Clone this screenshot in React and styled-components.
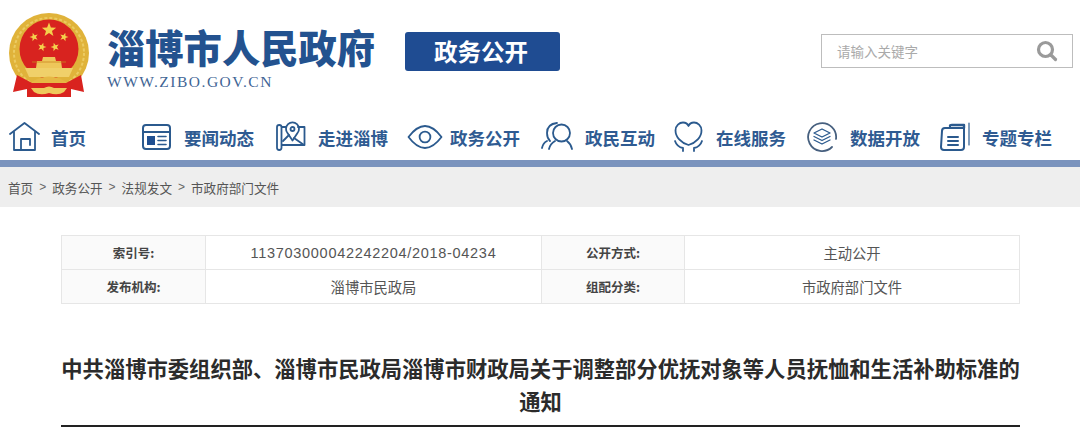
import React from "react";
import styled, { createGlobalStyle } from "styled-components";

const Global = createGlobalStyle`
  html, body { margin: 0; padding: 0; background: #fff; }
  body { width: 1080px; height: 437px; overflow: hidden; font-family: "Noto Sans CJK SC", "Liberation Sans", sans-serif; }
`;
const Page = styled.div`width: 1080px; height: 437px; overflow: hidden;`;
const Header = styled.header`display: flex; align-items: flex-start; height: 110px; padding: 12px 0 0 8px; box-sizing: border-box;`;
const Emblem = styled.svg`width: 81px; height: 88px; flex: none;`;
const Brand = styled.div`display: flex; flex-direction: column; margin-left: 18px; width: 298px; padding-top: 12px;`;
const BrandName = styled.div`font-size: 38.3px; line-height: 46px; font-weight: 900; color: #23528f; white-space: nowrap;`;
const BrandUrl = styled.div`font-family: "Liberation Serif", serif; font-size: 15.5px; line-height: 18px; margin-top: 3px; color: #3f6595; letter-spacing: 1.5px;`;
const Badge = styled.div`width: 155px; height: 39px; box-sizing: border-box; padding: 0 3px 2px 0; margin: 20px 0 0 0; background: #1f4c92; color: #fff; border-radius: 3px; font-size: 23.5px; font-weight: 700; display: flex; align-items: center; justify-content: center;`;
const Search = styled.div`width: 252px; height: 34px; margin: 22px 0 0 261px; flex: none; box-sizing: border-box; border: 1px solid #bdbdbd; display: flex; align-items: center; justify-content: space-between; padding: 0 13px 0 15px; color: #aaa; font-size: 13.5px;`;
const Nav = styled.nav`display: flex; height: 50px; box-sizing: border-box; padding: 9px 0 0 9px; align-items: flex-start;`;
const NavItem = styled.div`display: flex; align-items: center; height: 36px; width: ${p => p.$w}px; flex: none; font-size: 17.5px; font-weight: 700; color: #2f5b92; white-space: nowrap;`;
const NavIcon = styled.svg`width: ${p => p.$w || 32}px; height: 32px; flex: none; margin-right: ${p => p.$gap}px; fill: none; stroke: #2b5a8e; stroke-width: ${p => p.$sw || 1.8}; stroke-linecap: round; stroke-linejoin: round;`;
const Stripe = styled.div`height: 7px; background: #7a93bd;`;
const Crumbs = styled.div`height: 40px; background: #eeeeee; display: flex; align-items: center; padding-left: 8px; font-size: 12.6px; color: #555; gap: 6px;`;
const Sep = styled.span`font-family: "Liberation Sans", sans-serif; color: #666; font-size: 12px;`;
const Content = styled.main`padding: 28px 60px 0 61px;`;
const Info = styled.div`display: grid; grid-template-columns: 144px 336px 143px 335px; border-top: 1px solid #e6e6e6; border-left: 1px solid #e6e6e6;`;
const Cell = styled.div`height: 34px; box-sizing: border-box; border-right: 1px solid #e6e6e6; border-bottom: 1px solid #e6e6e6; display: flex; align-items: center; justify-content: center; font-size: 14.3px; color: #555;`;
const Code = styled(Cell)`font-family: "Liberation Sans", sans-serif; font-size: 14.5px; letter-spacing: 0.7px;`;
const Key = styled(Cell)`background: #fafafa; font-weight: 700; color: #444; font-size: 12.5px;`;
const Title = styled.h1`margin: 47px 0 0; font-size: 21.3px; line-height: 33px; font-weight: 700; color: #2b2b2b; text-align: center; height: 74px; border-bottom: 2px solid #222;`;

const star = (cx, cy, r, rot = 0) => {
  const pts = [];
  for (let i = 0; i < 10; i++) {
    const a = (Math.PI / 5) * i - Math.PI / 2 + rot;
    const q = i % 2 ? r * 0.42 : r;
    pts.push(`${(cx + q * Math.cos(a)).toFixed(1)},${(cy + q * Math.sin(a)).toFixed(1)}`);
  }
  return pts.join(" ");
};

const NationalEmblem = () => (
  <Emblem viewBox="0 0 81 88">
    <circle cx="41" cy="41" r="40" fill="#e0b33a" />
    <circle cx="41" cy="41" r="35" fill="none" stroke="#eccb62" strokeWidth="2" strokeDasharray="3 2" />
    <circle cx="41" cy="37" r="29.5" fill="#d8231f" />
    <polygon points={star(41, 18, 7.5)} fill="#f4d14c" />
    <polygon points={star(26, 25, 4.5, -0.3)} fill="#f4d14c" />
    <polygon points={star(34, 35, 4.5, 0.3)} fill="#f4d14c" />
    <polygon points={star(47, 35, 4.5, -0.3)} fill="#f4d14c" />
    <polygon points={star(56, 25, 4.5, 0.3)} fill="#f4d14c" />
    <path d="M28 56 L29 49 L34 49 L35 45 L47 45 L48 49 L53 49 L54 56 Z" fill="#eec65a" />
    <path d="M24 50 H58" stroke="#c9861f" strokeWidth="0.8" />
    <path d="M17 56 H65 L61 65 H21 Z" fill="#f0d06a" />
    <path d="M22 71 Q41 58 60 71 L56 74 H26 Z" fill="#e6b843" />
    <path d="M9 63 L24 71 H58 L73 63 L76 80 L63 77 V85 H19 V77 L5 80 Z" fill="#d9231f" />
    <path d="M23 76 H36 Q41 73 46 76 H59 L56 80 Q50 84 41 81 Q32 84 26 80 Z" fill="#efc95c" />
  </Emblem>
);

const Loupe = () => (
  <svg width="24" height="24" viewBox="0 0 24 24" fill="none" stroke="#9a9a9a" strokeWidth="3.2" strokeLinecap="round">
    <circle cx="10.5" cy="10.5" r="7" />
    <path d="M16 16 L20.5 20.5" />
  </svg>
);

const HomeIcon = () => (
  <NavIcon viewBox="0 0 32 32" $w={32} $gap={10}>
    <path d="M1 13 L15.5 2 L30 13" />
    <path d="M5 11 V29 H26 V11" />
    <path d="M12 29 V18 H21 V24" />
  </NavIcon>
);
const NewsIcon = () => (
  <NavIcon viewBox="0 0 32 32" $w={32} $gap={11} $sw={2}>
    <rect x="2" y="4" width="27" height="24" rx="3" />
    <path d="M2 11 H29" />
    <path d="M17 15.5 H25 M17 19.5 H25 M17 23.5 H25" strokeWidth="1.6" />
    <rect x="6" y="15" width="8" height="9" fill="#1f4f91" stroke="none" />
  </NavIcon>
);
const MapIcon = () => (
  <NavIcon viewBox="0 0 32 32" $w={32} $gap={11}>
    <rect x="2" y="4" width="4.5" height="25" rx="2.2" />
    <path d="M7 6 H11 M23 6 H29.5 V24 H7" />
    <path d="M12.5 12 A6.5 6.5 0 1 1 22.5 12 L17.5 19.5 Z" />
    <circle cx="17.5" cy="8" r="2" />
    <path d="M8 20 L14 14 M19 17 L29 24" />
  </NavIcon>
);
const EyeIcon = () => (
  <NavIcon viewBox="0 0 36 32" $w={36} $gap={7}>
    <path d="M1.5 16 Q18 -6 34.5 16 Q18 38 1.5 16 Z" />
    <circle cx="18" cy="16" r="5.4" />
  </NavIcon>
);
const PeopleIcon = () => (
  <NavIcon viewBox="0 0 32 32" $w={32} $gap={12}>
    <circle cx="20.5" cy="12" r="8.5" />
    <path d="M14 20 Q9 23 8 28 M26 20 Q30 23 31 28" />
    <path d="M16 2 Q6 3 6 12 Q6 17 9 20 M1 27 Q2 22 6 20" />
  </NavIcon>
);
const HeartIcon = () => (
  <NavIcon viewBox="0 0 32 32" $w={32} $gap={11}>
    <path d="M15.5 24 C8 22 2.5 16 2.5 9.5 C2.5 4.5 6.5 1.5 10 1.5 C12.5 1.5 14.5 2.5 15.5 5 C16.5 2.5 18.5 1.5 21 1.5 C24.5 1.5 28.5 4.5 28.5 9.5 C28.5 16 23 22 15.5 24 Z" />
    <path d="M2 20 Q4 26 10 27 V30 M29 20 Q27 26 21 27 V30" />
  </NavIcon>
);
const LayersIcon = () => (
  <NavIcon viewBox="0 0 32 32" $w={32} $gap={11}>
    <path d="M25 26 A14 14 0 1 1 29 18" stroke="#47607f" />
    <path d="M15 8 L23 12 L15 16 L7 12 Z" strokeWidth="1.3" />
    <path d="M7 15.5 L15 19.5 L23 15.5 M7 19 L15 23 L23 19" strokeWidth="1.3" />
  </NavIcon>
);
const BookIcon = () => (
  <NavIcon viewBox="0 0 32 32" $w={32} $gap={11}>
    <path d="M25 7 V26 Q25 29 22 29 H5 Q2 29 2 26 L3 10 Q3 7 6 7 Z" strokeWidth="2" />
    <path d="M11 5 Q11 4 13 4 H25 V7" strokeWidth="2.4" />
    <path d="M30 2 V24" strokeWidth="1.2" />
    <path d="M9 16 H19 M9 20 H19 M9 24 H19" strokeWidth="2" />
  </NavIcon>
);

const items = [
  ["首页", HomeIcon, 132],
  ["要闻动态", NewsIcon, 134],
  ["走进淄博", MapIcon, 132],
  ["政务公开", EyeIcon, 134],
  ["政民互动", PeopleIcon, 132],
  ["在线服务", HeartIcon, 134],
  ["数据开放", LayersIcon, 132],
  ["专题专栏", BookIcon, 130],
];

export default function App() {
  return (
    <Page>
      <Global />
      <Header>
        <NationalEmblem />
        <Brand>
          <BrandName>淄博市人民政府</BrandName>
          <BrandUrl>WWW.ZIBO.GOV.CN</BrandUrl>
        </Brand>
        <Badge>政务公开</Badge>
        <Search>
          <span>请输入关键字</span>
          <Loupe />
        </Search>
      </Header>
      <Nav>
        {items.map(([label, Icon, w]) => (
          <NavItem key={label} $w={w}>
            <Icon />
            {label}
          </NavItem>
        ))}
      </Nav>
      <Stripe />
      <Crumbs>
        <span>首页</span><Sep>&gt;</Sep>
        <span>政务公开</span><Sep>&gt;</Sep>
        <span>法规发文</span><Sep>&gt;</Sep>
        <span>市政府部门文件</span>
      </Crumbs>
      <Content>
        <Info>
          <Key>索引号:</Key>
          <Code>113703000042242204/2018-04234</Code>
          <Key>公开方式:</Key>
          <Cell>主动公开</Cell>
          <Key>发布机构:</Key>
          <Cell>淄博市民政局</Cell>
          <Key>组配分类:</Key>
          <Cell>市政府部门文件</Cell>
        </Info>
        <Title>中共淄博市委组织部、淄博市民政局淄博市财政局关于调整部分优抚对象等人员抚恤和生活补助标准的通知</Title>
      </Content>
    </Page>
  );
}
